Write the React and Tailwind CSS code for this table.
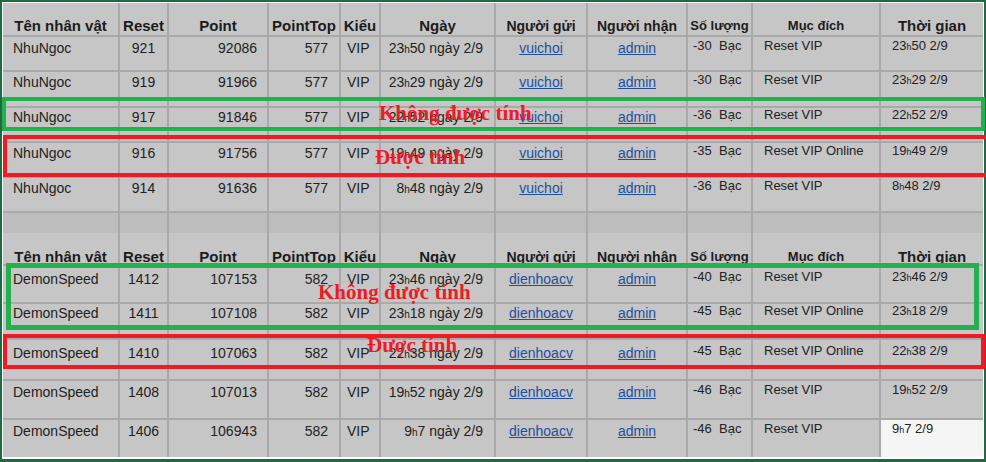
import React from 'react'

// column template shared by every row of both tables
const COLS =
  'grid grid-cols-[117px_49px_100px_72px_40px_115px_92px_100px_65px_128px_102px]'

const HEADERS = [
  ['Tên nhân vật', 'text-[15px]'],
  ['Reset', 'text-[15px]'],
  ['Point', 'text-[15px]'],
  ['PointTop', 'text-[15px]'],
  ['Kiểu', 'text-[15px]'],
  ['Ngày', 'text-[15px]'],
  ['Người gửi', 'text-[14px]'],
  ['Người nhận', 'text-[14px]'],
  ['Số lượng', 'text-[13px]'],
  ['Mục đích', 'text-[13px]'],
  ['Thời gian', 'text-[15px]'],
]

const TABLE_1 = [
  { h: 'h-[35px]', pt: 'pt-[3px]', name: 'NhuNgoc', reset: '921', point: '92086', top: '577', day: ['23', '50'], from: 'vuichoi', amount: '-30', goal: 'Reset VIP' },
  { h: 'h-[36px]', pt: 'pt-[2px]', name: 'NhuNgoc', reset: '919', point: '91966', top: '577', day: ['23', '29'], from: 'vuichoi', amount: '-30', goal: 'Reset VIP' },
  { h: 'h-[35px]', pt: 'pt-[1px]', name: 'NhuNgoc', reset: '917', point: '91846', top: '577', day: ['22', '52'], from: 'vuichoi', amount: '-36', goal: 'Reset VIP' },
  { h: 'h-[35px]', pt: 'pt-[2px]', name: 'NhuNgoc', reset: '916', point: '91756', top: '577', day: ['19', '49'], from: 'vuichoi', amount: '-35', goal: 'Reset VIP Online' },
  { h: 'h-[35px]', pt: 'pt-[2px]', name: 'NhuNgoc', reset: '914', point: '91636', top: '577', day: ['8', '48'], from: 'vuichoi', amount: '-36', goal: 'Reset VIP' },
]

const TABLE_2 = [
  { h: 'h-[38px]', pt: 'pt-[5px]', name: 'DemonSpeed', reset: '1412', point: '107153', top: '582', day: ['23', '46'], from: 'dienhoacv', amount: '-40', goal: 'Reset VIP' },
  { h: 'h-[36px]', pt: 'pt-[1px]', name: 'DemonSpeed', reset: '1411', point: '107108', top: '582', day: ['23', '18'], from: 'dienhoacv', amount: '-45', goal: 'Reset VIP Online' },
  { h: 'h-[41px]', pt: 'pt-[5px]', name: 'DemonSpeed', reset: '1410', point: '107063', top: '582', day: ['22', '38'], from: 'dienhoacv', amount: '-45', goal: 'Reset VIP Online' },
  { h: 'h-[39px]', pt: 'pt-[3px]', name: 'DemonSpeed', reset: '1408', point: '107013', top: '582', day: ['19', '52'], from: 'dienhoacv', amount: '-46', goal: 'Reset VIP' },
  { h: 'h-[37px]', pt: 'pt-[3px]', name: 'DemonSpeed', reset: '1406', point: '106943', top: '582', day: ['9', '7'], from: 'dienhoacv', amount: '-46', goal: 'Reset VIP', last: true },
]

const line = 'border-r-2 border-[#a9a9a9]'

const HeaderRow = ({ h, pt }) => (
  <div className={`${COLS} ${h} border-b-2 border-[#a9a9a9]`}>
    {HEADERS.map(([label, size], i) => (
      <div
        key={label}
        className={`${pt} ${size} leading-[18px] font-bold text-center whitespace-nowrap text-[#1c1c1c] ${
          i < HEADERS.length - 1 ? line : ''
        }`}
      >
        {label}
      </div>
    ))}
  </div>
)

const Hour = ({ parts, small }) => (
  <>
    {parts[0]}
    <span className={small}>h</span>
    {parts[1]}
  </>
)

const Link = ({ children }) => (
  <span className="text-[#1d4f9e] underline decoration-[#1d4f9e]">{children}</span>
)

const DataRow = ({ r }) => (
  <div className={`${COLS} ${r.h} ${r.last ? '' : 'border-b-2 border-[#a9a9a9]'} text-[14px] leading-4 text-[#222] whitespace-nowrap`}>
    <div className={`${r.pt} ${line} pl-[10px]`}>{r.name}</div>
    <div className={`${r.pt} ${line} text-center`}>{r.reset}</div>
    <div className={`${r.pt} ${line} text-right pr-[10px]`}>{r.point}</div>
    <div className={`${r.pt} ${line} text-right pr-[11px]`}>{r.top}</div>
    <div className={`${r.pt} ${line} pl-[6px]`}>VIP</div>
    <div className={`${r.pt} ${line} text-right pr-[11px]`}>
      <Hour parts={r.day} small="text-[10px]" /> ngày 2/9
    </div>
    <div className={`${r.pt} ${line} text-center`}>
      <Link>{r.from}</Link>
    </div>
    <div className={`${r.pt} ${line} text-center`}>
      <Link>admin</Link>
    </div>
    <div className={`${r.pt} ${line} pl-[5px] text-[13px] leading-3`}>
      {r.amount}
      {'\u00a0\u00a0'}Bạc
    </div>
    <div className={`${r.pt} ${line} pl-[11px] text-[13px] leading-3`}>{r.goal}</div>
    <div className={`${r.pt} pl-[11px] text-[13px] leading-3 ${r.last ? 'bg-[#f5f5f5]' : ''}`}>
      <Hour parts={r.day} small="text-[9px]" /> 2/9
    </div>
  </div>
)

const EmptyRow = () => (
  <div className={`${COLS} h-[20px] bg-[#bdbdbd]`}>
    {HEADERS.map(([label], i) => (
      <div key={label} className={i < HEADERS.length - 1 ? line : ''} />
    ))}
  </div>
)

const Note = ({ className, children }) => (
  <div
    className={`absolute font-['Liberation_Serif','Times_New_Roman',serif] font-bold text-[21px] leading-[21px] text-[#ed1c24] whitespace-nowrap ${className}`}
  >
    {children}
  </div>
)

export default function App() {
  return (
    <div className="relative w-[986px] h-[462px] overflow-hidden bg-[#1e6b41] pt-[2px] pl-[2px] pr-[2px] pb-[3px] font-['Liberation_Sans',Arial,sans-serif]">
      <div className="border-t border-l border-r border-b-2 border-white bg-[#c6c6c6]">
        <HeaderRow h="h-[34px]" pt="pt-[14px]" />
        {TABLE_1.map((r) => (
          <DataRow key={r.reset} r={r} />
        ))}
        <EmptyRow />
        <HeaderRow h="h-[33px]" pt="pt-[15px]" />
        {TABLE_2.map((r) => (
          <DataRow key={r.reset} r={r} />
        ))}
      </div>

      {/* paint-style annotation boxes */}
      <div className="absolute left-[2px] top-[97px] w-[983px] h-[34px] border-4 border-[#22b14c]" />
      <div className="absolute left-[3px] top-[135px] w-[990px] h-[42px] border-4 border-[#ed1c24]" />
      <div className="absolute left-[6px] top-[263px] w-[973px] h-[67px] border-[5px] border-[#22b14c]" />
      <div className="absolute left-[3px] top-[334px] w-[982px] h-[35px] border-4 border-[#ed1c24]" />

      <Note className="left-[379px] top-[103px]">Không được tính</Note>
      <Note className="left-[375px] top-[147px]">Được tính</Note>
      <Note className="left-[318px] top-[282px]">Không được tính</Note>
      <Note className="left-[367px] top-[335px]">Được tính</Note>
    </div>
  )
}
